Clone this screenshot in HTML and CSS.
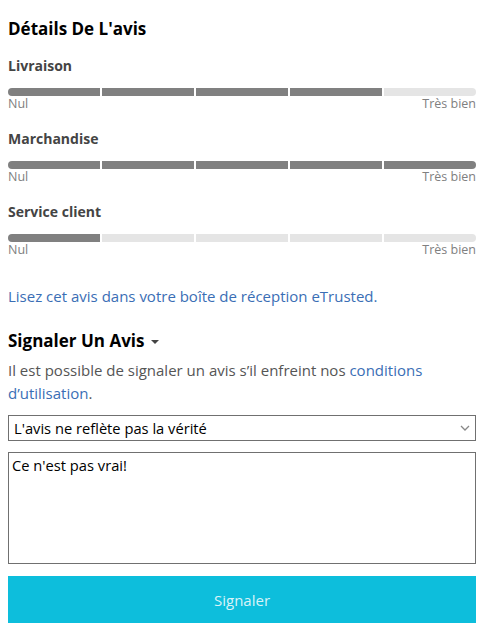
FILE: index.html
```html
<!DOCTYPE html>
<html lang="fr">
<head>
<meta charset="utf-8">
<link rel="stylesheet" href="styles.css">
</head>
<body>
<div class="page">
  <h2 class="title">Détails De L'avis</h2>

  <div class="rating">
    <div class="rating-name">Livraison</div>
    <div class="bar">
      <span class="seg on"></span><span class="seg on"></span><span class="seg on"></span><span class="seg on"></span><span class="seg"></span>
    </div>
    <div class="scale"><span>Nul</span><span>Très bien</span></div>
  </div>

  <div class="rating">
    <div class="rating-name">Marchandise</div>
    <div class="bar">
      <span class="seg on"></span><span class="seg on"></span><span class="seg on"></span><span class="seg on"></span><span class="seg on"></span>
    </div>
    <div class="scale"><span>Nul</span><span>Très bien</span></div>
  </div>

  <div class="rating">
    <div class="rating-name">Service client</div>
    <div class="bar">
      <span class="seg on"></span><span class="seg"></span><span class="seg"></span><span class="seg"></span><span class="seg"></span>
    </div>
    <div class="scale"><span>Nul</span><span>Très bien</span></div>
  </div>

  <p class="inbox"><a class="link" href="#">Lisez cet avis dans votre boîte de réception eTrusted</a>.</p>

  <h2 class="title report-title">Signaler Un Avis <span class="caret"></span></h2>
  <p class="note">Il est possible de signaler un avis s’il enfreint nos <a class="link" href="#">conditions d’utilisation</a>.</p>

  <form class="report">
    <div class="select-wrap">
      <select class="select">
        <option>L'avis ne reflète pas la vérité</option>
      </select>
      <svg class="chev" width="10" height="6" viewBox="0 0 10 6"><path d="M1 1l4 4 4-4" fill="none" stroke="#888" stroke-width="1.3"/></svg>
    </div>
    <textarea class="textarea">Ce n'est pas vrai!</textarea>
    <button type="button" class="btn">Signaler</button>
  </form>
</div>
</body>
</html>
```

FILE: styles.css
```css
html, body {
  margin: 0;
  padding: 0;
  background: #fff;
}
body {
  margin: 8px 6px 8px 8px;
  font-family: "Open Sans", "Noto Sans", sans-serif;
  color: #333;
}
.page {
  padding-top: 9px;
}
.title {
  font-size: 17px;
  line-height: 24px;
  font-weight: 700;
  color: #000;
  margin: 0 0 15px;
}
.rating {
  margin-bottom: 17px;
}
.rating-name {
  font-size: 14px;
  line-height: 20px;
  font-weight: 700;
  color: #444;
  margin-bottom: 12px;
}
.bar {
  display: flex;
  gap: 2px;
  height: 8px;
}
.seg {
  flex: 1;
  background: #e5e5e5;
}
.seg.on {
  background: #808080;
}
.seg:first-child {
  border-radius: 4px 0 0 4px;
}
.seg:last-child {
  border-radius: 0 4px 4px 0;
}
.scale {
  display: flex;
  justify-content: space-between;
  font-size: 12.5px;
  line-height: 16px;
  color: #808080;
}
.inbox {
  margin: 28px 0 23px;
  font-size: 15px;
  line-height: 20px;
  color: #3a6eb5;
}
.link {
  color: #3a6eb5;
  text-decoration: none;
}
.report-title {
  margin: 0 0 6px;
  display: flex;
  align-items: center;
  gap: 7px;
}
.caret {
  width: 0;
  height: 0;
  border-left: 4px solid transparent;
  border-right: 4px solid transparent;
  border-top: 4px solid #444;
  margin-top: 2px;
}
.note {
  margin: 0 0 10px;
  font-size: 15px;
  line-height: 23px;
  color: #555;
}
.report {
  display: flex;
  flex-direction: column;
}
.select-wrap {
  position: relative;
  margin-bottom: 11px;
}
.select {
  appearance: none;
  -webkit-appearance: none;
  width: 100%;
  height: 26px;
  box-sizing: border-box;
  border: 1px solid #707070;
  border-radius: 0;
  background: #fff;
  font-family: "Open Sans", "Noto Sans", sans-serif;
  font-size: 14.7px;
  color: #000;
  padding: 0 0 0 5px;
  margin: 0;
}
.chev {
  position: absolute;
  right: 6px;
  top: 10px;
}
.textarea {
  box-sizing: border-box;
  width: 100%;
  height: 112px;
  border: 1px solid #707070;
  border-radius: 0;
  font-family: "Open Sans", "Noto Sans", sans-serif;
  font-size: 14.7px;
  line-height: 20px;
  color: #000;
  padding: 2px 3px;
  margin: 0 0 12px;
  resize: none;
}
.btn {
  height: 47px;
  width: 100%;
  border: 0;
  background: #0dbedc;
  color: #d9f3f8;
  font-family: "Open Sans", "Noto Sans", sans-serif;
  font-size: 15px;
  cursor: pointer;
}
```
